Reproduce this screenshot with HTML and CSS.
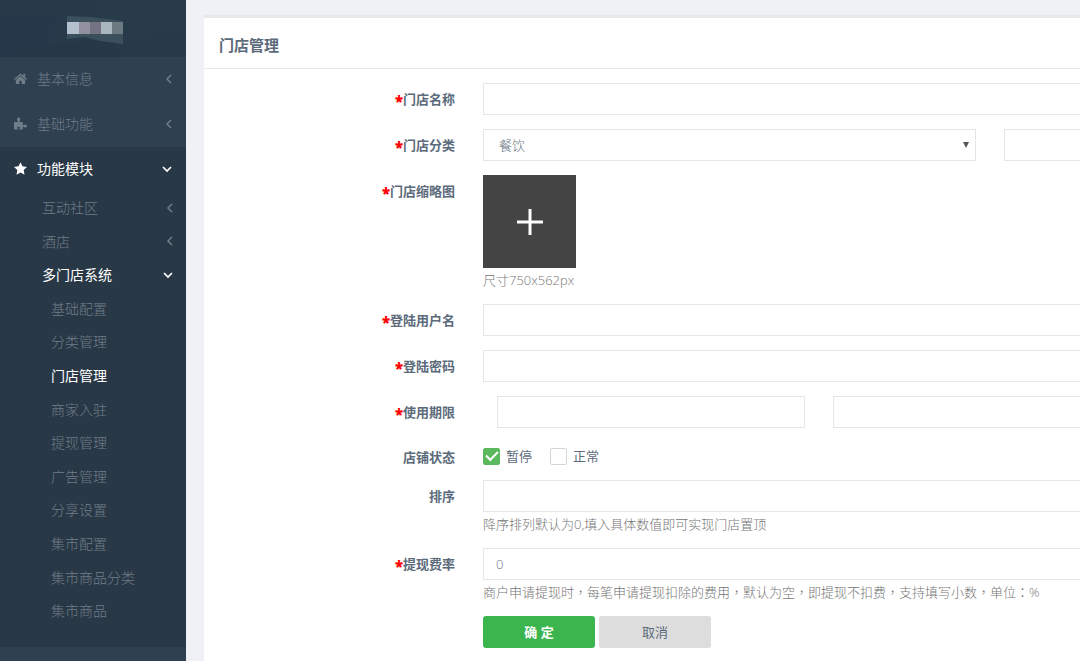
FILE: index.html
```html
<!DOCTYPE html>
<html lang="zh-CN">
<head>
<meta charset="utf-8">
<meta name="viewport" content="width=device-width, initial-scale=1">
<title>门店管理</title>
<link rel="stylesheet" href="styles.css">
</head>
<body class="layout">
<svg class="defs" aria-hidden="true">
  <symbol id="left" viewBox="0 0 10 10"><path d="M7 1L3 5l4 4" fill="none" stroke="currentColor" stroke-width="1.5"/></symbol>
  <symbol id="down" viewBox="0 0 10 10"><path d="M1 3l4 4 4-4" fill="none" stroke="currentColor" stroke-width="1.7"/></symbol>
</svg>
<aside class="sidebar">
  <div class="brand">
    <svg class="brand-art" viewBox="0 0 186 57" preserveAspectRatio="none" aria-hidden="true">
      <path d="M0 0H186V57H0z" fill="#273a49"/>
      <path d="M0 15L62 17 48 42 0 57z" fill="#26394a"/>
      <path d="M95 0H186V30L112 44z" fill="#283b4a"/>
      <path d="M62 44L112 38 121 57H0V52z" fill="#253848"/>
      <path d="M67 16L92 17 123 21V44L100 41 84 37 67 39z" fill="#3b4f5d"/>
      <path d="M67 22h12v12H67z" fill="#b4c0ce"/>
      <path d="M79 22h11v12H79z" fill="#93919f"/>
      <path d="M90 22h11v12H90z" fill="#747383"/>
      <path d="M101 22h11v12h-11z" fill="#a9b8bf"/>
      <path d="M112 22h11v12h-11z" fill="#6b7b81"/>
    </svg>
  </div>
  <nav>
    <ul class="menu">
      <li><a class="menu-link" href="#">
        <svg class="icon" viewBox="0 0 14 14"><path d="M7 1.500L0 7.500l.9 1L7 3.400l6.100 5.100.9-1-2-1.700V2h-1.900v2.100zM7 4.300L2 8.500V13h3.800V9.500h2.400V13H12V8.500z" fill="currentColor"/></svg>
        <span>基本信息</span><svg class="arrow"><use href="#left"/></svg></a></li>
      <li><a class="menu-link" href="#">
        <svg class="icon" viewBox="0 0 14 14"><path d="M0 5.500h3.800c.5 0 .6-.5.200-.9C2.600 3 3.300.5 5 .5s2.400 2.500 1 4.100c-.4.400-.3.900.2.900H9.500v3c0 .5.400.6.800.3 1.600-1.300 3.700-.7 3.700.9s-2.100 2.200-3.700.9c-.4-.3-.8-.2-.8.300V13.500H6.200c-.5 0-.6-.5-.3-.9.900-1.100.3-2.100-.9-2.100s-1.800 1-.9 2.100c.3.400.2.900-.3.900H0z" fill="currentColor"/></svg>
        <span>基础功能</span><svg class="arrow"><use href="#left"/></svg></a></li>
      <li class="menu-section"><a class="menu-link is-active" href="#">
        <svg class="icon" viewBox="0 0 14 14"><path d="M7 .2l2.100 4.400 4.900.7-3.600 3.400.9 4.900L7 11.300l-4.300 2.300.9-4.900L0 5.300l4.900-.7z" fill="currentColor"/></svg>
        <span>功能模块</span><svg class="arrow"><use href="#down"/></svg></a>
        <ul class="submenu">
          <li><a class="sub-link" href="#"><span>互动社区</span><svg class="arrow"><use href="#left"/></svg></a></li>
          <li><a class="sub-link" href="#"><span>酒店</span><svg class="arrow"><use href="#left"/></svg></a></li>
          <li><a class="sub-link is-active" href="#"><span>多门店系统</span><svg class="arrow"><use href="#down"/></svg></a>
            <ul class="leafmenu">
              <li><a class="leaf-link" href="#">基础配置</a></li>
              <li><a class="leaf-link" href="#">分类管理</a></li>
              <li><a class="leaf-link is-active" href="#">门店管理</a></li>
              <li><a class="leaf-link" href="#">商家入驻</a></li>
              <li><a class="leaf-link" href="#">提现管理</a></li>
              <li><a class="leaf-link" href="#">广告管理</a></li>
              <li><a class="leaf-link" href="#">分享设置</a></li>
              <li><a class="leaf-link" href="#">集市配置</a></li>
              <li><a class="leaf-link" href="#">集市商品分类</a></li>
              <li><a class="leaf-link" href="#">集市商品</a></li>
            </ul>
          </li>
        </ul>
      </li>
    </ul>
  </nav>
</aside>
<main class="content">
  <section class="panel">
    <h1 class="panel-title">门店管理</h1>
    <form class="form">
      <div class="row">
        <label class="label" for="name"><b class="req">*</b>门店名称</label>
        <input class="field" id="name" type="text">
      </div>
      <div class="row">
        <label class="label" for="category"><b class="req">*</b>门店分类</label>
        <div class="category">
          <div class="select">
            <select class="field is-boxed" id="category"><option>餐饮</option></select>
            <svg class="caret" viewBox="0 0 6 6" aria-hidden="true"><path d="M0 0h6L3 6z" fill="#555"/></svg>
          </div>
          <select class="field" aria-label="二级分类"></select>
        </div>
      </div>
      <div class="row">
        <label class="label" for="thumb"><b class="req">*</b>门店缩略图</label>
        <div>
          <button class="upload" id="thumb" type="button" aria-label="上传">
            <svg class="plus" viewBox="0 0 26 26"><path d="M13 0v26M0 13h26" stroke="#fff" stroke-width="3"/></svg>
          </button>
          <p class="help">尺寸750x562px</p>
        </div>
      </div>
      <div class="row">
        <label class="label" for="user"><b class="req">*</b>登陆用户名</label>
        <input class="field" id="user" type="text">
      </div>
      <div class="row">
        <label class="label" for="password"><b class="req">*</b>登陆密码</label>
        <input class="field" id="password" type="password">
      </div>
      <div class="row">
        <label class="label" for="start"><b class="req">*</b>使用期限</label>
        <div class="period">
          <input class="field is-boxed" id="start" type="text">
          <input class="field" type="text" aria-label="结束日期">
        </div>
      </div>
      <div class="row" role="group" aria-labelledby="status">
        <span class="label is-short" id="status">店铺状态</span>
        <div class="checks">
          <label class="check"><input class="box" type="checkbox" checked>暂停</label>
          <label class="check"><input class="box" type="checkbox">正常</label>
        </div>
      </div>
      <div class="row">
        <label class="label" for="order">排序</label>
        <div>
          <input class="field" id="order" type="text">
          <p class="help">降序排列默认为0,填入具体数值即可实现门店置顶</p>
        </div>
      </div>
      <div class="row">
        <label class="label" for="rate"><b class="req">*</b>提现费率</label>
        <div>
          <input class="field" id="rate" type="text" value="0">
          <p class="help is-centered-marks" lang="zh-TW">商户申请提现时，每笔申请提现扣除的费用，默认为空，即提现不扣费，支持填写小数，单位：%</p>
        </div>
      </div>
      <div class="actions">
        <button class="btn btn-primary" type="submit">确 定</button>
        <button class="btn" type="button">取消</button>
      </div>
    </form>
  </section>
</main>
</body>
</html>
```
FILE: styles.css
```css
* { box-sizing: border-box; }

.layout {
  display: flex;
  min-height: 100vh;
  margin: 0;
  background: #f0f1f7;
  color: #5c6b7b;
  font: 300 13px/22px "Open Sans", "Noto Sans CJK SC", sans-serif;
}

.defs { position: absolute; width: 0; height: 0; }

/* Sidebar */
.sidebar { flex: 0 0 186px; background: #2f4050; }
.brand { height: 57px; background: #273a49; }
.brand-art { display: block; width: 100%; height: 100%; }

.menu, .submenu, .leafmenu { margin: 0; padding: 0; list-style: none; }
.menu { font-size: 14px; }
.menu a { display: flex; align-items: center; color: #6f7d89; text-decoration: none; }
.menu a.is-active { color: #fff; font-weight: 400; }
.menu span { flex: 1; }
.menu-link { height: 45px; padding: 0 14px 2px; gap: 10px; }
.menu-section { padding-bottom: 19px; background: #293846; }
.submenu { margin-top: -1px; }
.sub-link, .leaf-link { line-height: 2.4; }
.sub-link { padding: 0 13px 0 42px; }
.leaf-link { padding-left: 51px; }
.icon { width: 13px; height: 13px; }
.arrow { width: 10px; height: 10px; margin-right: -2px; }
.is-active .arrow { margin-right: 0; color: #fff; }

/* Panel */
.content { flex: 1; min-width: 0; padding: 15px 0 0 18px; }
.panel { min-height: 100%; border-top: 3px solid #e7e8ec; background: #fff; }
.panel-title {
  margin: 0;
  padding: 16px 15px 12px;
  border-bottom: 1px solid #e7eaec;
  font-size: 15px;
  line-height: 22px;
  font-weight: 700;
}

/* Form */
.form { display: flex; flex-direction: column; gap: 14px; padding: 14px 0 13px; }
.row { display: grid; grid-template-columns: 251px minmax(0, 1fr); column-gap: 28px; align-items: start; }
.label { padding-top: 5px; text-align: right; font-weight: 700; }
.label.is-short { height: 24px; padding-top: 4px; }
.req { color: #f00; font-size: 15px; line-height: 16px; vertical-align: -3px; }

.field {
  display: block;
  width: 100%;
  height: 32px;
  padding: 0 12px;
  border: 1px solid #e5e6e7;
  border-right: 0;
  border-radius: 0;
  background: #fff;
  color: #6b7885;
  font: inherit;
  appearance: none;
}
.field.is-boxed { border-right: 1px solid #e5e6e7; }
select.field { padding-left: 15px; }

.category { display: grid; grid-template-columns: 13fr 2fr; gap: 28px; }
.period { display: grid; grid-template-columns: 5fr 4fr; gap: 28px; padding-left: 14px; }
.select { position: relative; }
.caret { position: absolute; right: 7px; top: 13px; width: 6px; height: 6px; pointer-events: none; }

.upload {
  display: flex;
  align-items: center;
  justify-content: center;
  width: 93px;
  height: 93px;
  padding: 0;
  border: 0;
  background: #444;
}
.plus { width: 26px; height: 26px; }
.help { margin: 0; padding-top: 2px; line-height: 20px; color: #757575; }
.is-centered-marks { font-family: "Open Sans", "Noto Sans CJK TC", sans-serif; }

.checks { display: flex; gap: 18px; padding-top: 4px; }
.check { display: flex; align-items: center; gap: 6px; line-height: 20px; font-weight: 400; }
.box {
  display: grid;
  place-items: center;
  width: 17px;
  height: 17px;
  margin: 0;
  border: 1px solid #d5d5d5;
  border-radius: 2px;
  background: #fff;
  appearance: none;
}
.box:checked { border-color: #5cb85c; background: #5cb85c; }
.box:checked::after {
  content: "";
  width: 10px;
  height: 5px;
  margin-bottom: 3px;
  border: solid #fff;
  border-width: 0 0 2px 2px;
  transform: rotate(-45deg);
}

.actions { display: flex; gap: 4px; padding-left: 279px; }
.btn {
  width: 112px;
  height: 32px;
  padding: 0;
  border: 0;
  border-radius: 3px;
  background: #ddd;
  color: #5c6b7b;
  font: inherit;
  font-weight: 400;
}
.btn-primary { background: #3db54f; color: #fff; font-weight: 700; }
```
